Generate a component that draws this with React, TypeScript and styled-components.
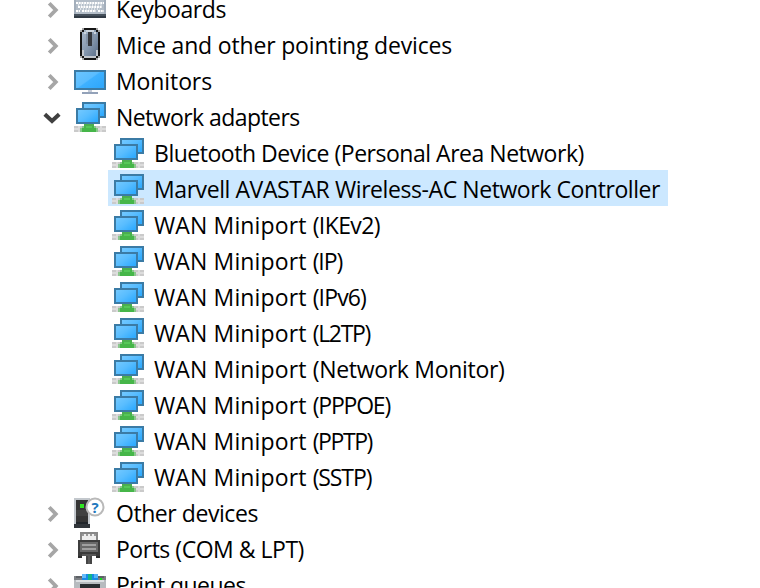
import React from "react";
import styled, { createGlobalStyle } from "styled-components";

interface Device {
  name: string;
  tracking: number;
  detail?: string;
  detailTracking?: number;
}

interface Category extends Device {
  icon: React.ReactNode;
  open?: boolean;
  children?: Device[];
}

const GlobalStyle = createGlobalStyle`
  body {
    margin: 0;
    background: #fff;
    overflow: hidden;
  }
`;

const Tree = styled.div`
  box-sizing: border-box;
  width: 760px;
  height: 588px;
  overflow: hidden;
  background: #fff;
  color: #000;
  font-family: "Open Sans", "Noto Sans", sans-serif;
  font-size: 23px;
`;

const Scroller = styled.div`
  margin-top: -10px;
`;

const Row = styled.div`
  display: flex;
  height: 36px;
  padding-left: 42px;
`;

const ChildRow = styled.div<{ $selected?: boolean }>`
  display: flex;
  box-sizing: border-box;
  width: 560px;
  height: 36px;
  margin-left: 108px;
  padding-left: 4px;
  background: ${({ $selected }) => ($selected ? "#cce8ff" : "transparent")};
`;

const Chevron = styled.svg`
  flex: none;
  width: 20px;
  height: 36px;
  margin-right: 12px;
  fill: none;
`;

const Icon = styled.svg`
  flex: none;
  width: 32px;
  height: 32px;
  margin-top: 2px;
  margin-right: 10px;
`;

const Label = styled.span<{ $tracking?: number }>`
  line-height: 39px;
  white-space: pre;
  letter-spacing: ${({ $tracking = 0 }) => $tracking}px;
`;

const KeyboardIcon = () => (
  <Icon viewBox="0 0 16 16" shapeRendering="crispEdges">
    <rect y="3" width="16" height="8" fill="#a3aebb" />
    <rect x="1" y="4" width="14" height="7" fill="#b3bdc8" />
    <path
      d="M1 5.5h14M2 7.5h12M1 9.5h2M4 9.5h7M12 9.5h3"
      stroke="#fff"
      strokeDasharray="1 .35"
      shapeRendering="auto"
    />
    <path d="M3 8.5h10M2 6.5h12" stroke="#dfe5ea" strokeDasharray=".6 .8" shapeRendering="auto" />
    <rect y="11" width="16" height="2" fill="#46515c" />
    <rect y="12" width="16" height="1" fill="#323b45" />
  </Icon>
);

const MouseIcon = () => (
  <Icon viewBox="0 0 16 16" shapeRendering="crispEdges">
    <defs>
      <linearGradient id="mouse" x1="0" y1="0" x2="1" y2="1">
        <stop offset="0" stopColor="#a9b8ca" />
        <stop offset=".5" stopColor="#8497ae" />
        <stop offset="1" stopColor="#5a6c86" />
      </linearGradient>
    </defs>
    <path d="M5 0h6v1h1v1h1v12h-1v1h-1v1H5v-1H4v-1H3V2h1V1h1z" fill="#151515" />
    <path d="M4 0h1v1H4zM11 0h1v1h-1zM3 1h1v1H3zM12 1h1v1h-1z" fill="#a5a5a5" />
    <path d="M3 14h1v1H3zM12 14h1v1h-1zM4 15h1v1H4zM11 15h1v1h-1z" fill="#aaa" />
    <path d="M5 1h6v1h1v12h-1v1H5v-1H4V2h1z" fill="url(#mouse)" />
    <path d="M6 1h4v1H6zM5 2h1v1H5zM10 2h1v1h-1z" fill="#ccd4dc" />
    <path d="M4 11h1v3H4zM11 11h1v3h-1zM5 14h6v1H5z" fill="#c3c8ce" />
    <rect x="7" y="2" width="2" height="7" fill="#34373d" />
    <path d="M6 3h1v5H6zM9 3h1v5H9z" fill="#8292a6" />
  </Icon>
);

const MonitorIcon = () => (
  <Icon viewBox="0 0 16 16" shapeRendering="crispEdges">
    <defs>
      <linearGradient id="screen" x1="0" y1="0" x2="1" y2=".8">
        <stop offset="0" stopColor="#6bc5ff" />
        <stop offset=".5" stopColor="#5abdff" />
        <stop offset=".55" stopColor="#3eb1ff" />
        <stop offset="1" stopColor="#30a8fc" />
      </linearGradient>
    </defs>
    <rect y="3" width="16" height="10" fill="#3b7ba5" />
    <rect x="1" y="4" width="14" height="8" fill="url(#screen)" />
    <rect x="7" y="13" width="2" height="1" fill="#c5ccd8" />
    <rect x="4" y="14" width="8" height="1" fill="#93a2b9" />
  </Icon>
);

const NetworkIcon = () => (
  <Icon viewBox="0 0 16 16" shapeRendering="crispEdges">
    <defs>
      <linearGradient id="net" x1="0" y1="0" x2="1" y2=".8">
        <stop offset="0" stopColor="#73c9ff" />
        <stop offset=".5" stopColor="#59bdff" />
        <stop offset="1" stopColor="#30abff" />
      </linearGradient>
    </defs>
    <rect x="4" y="1" width="12" height="8" fill="#3b7ba5" />
    <rect x="5" y="2" width="10" height="6" fill="url(#net)" />
    <rect x="1" y="4" width="12" height="8" fill="#3b7ba5" />
    <rect x="2" y="5" width="10" height="6" fill="url(#net)" />
    <rect y="13" width="16" height="3" fill="#cacaca" />
    <rect y="14" width="16" height="1" fill="#dcdcdc" />
    <path d="M2 13h1v3H2zM13 13h1v3h-1z" fill="#dcdcdc" />
    <rect x="5" y="12" width="5" height="1" fill="#4caf4f" />
    <rect x="4" y="13" width="7" height="3" fill="#46b649" />
    <path d="M4 13h1v1H4zM10 13h1v1h-1zM3 14h1v2H3zM11 14h1v2h-1z" fill="#8ac78c" />
    <rect x="6" y="13" width="3" height="1" fill="#55c858" />
  </Icon>
);

const UnknownIcon = () => (
  <Icon viewBox="0 0 32 32">
    <g shapeRendering="crispEdges">
      <rect y="2" width="16" height="26" fill="#c3c8cd" />
      <rect x="2" y="4" width="12" height="22" fill="#353535" />
      <rect x="2" y="14" width="12" height="6" fill="#414141" />
      <rect x="6" y="8" width="4" height="4" fill="#31e622" />
      <rect y="28" width="16" height="4" fill="#30353a" />
      <rect x="2" y="26" width="12" height="2" fill="#20252a" />
    </g>
    <circle cx="21" cy="11" r="8.5" fill="#fff" stroke="#b9b9b9" strokeWidth="2" />
    <text
      x="21"
      y="16.5"
      textAnchor="middle"
      fontFamily="Open Sans"
      fontSize="15"
      fontWeight="700"
      fill="#2277bd"
    >
      ?
    </text>
  </Icon>
);

const PortIcon = () => (
  <Icon viewBox="0 0 16 16" shapeRendering="crispEdges">
    <rect x="3" width="9" height="4" fill="#878787" />
    <rect x="4" y="1" width="7" height="3" fill="#ededed" />
    <path d="M4 1h1v1H4zM6 1h1v1H6zM8 1h1v1H8zM10 1h1v1h-1z" fill="#999" />
    <path d="M2 4h11v6h-1v1H3v-1H2z" fill="#3d3d3d" />
    <rect x="3" y="5" width="9" height="5" fill="#696969" />
    <path d="M4 6h7v1H4zM4 8h7v1H4z" fill="#a0a0a0" />
    <path d="M2 10h11v2H2z" fill="#3b3b3b" />
    <path d="M2 12h2v1H2zM11 12h2v1h-2z" fill="#2c2c2c" />
    <rect x="4" y="11" width="7" height="1" fill="#575757" />
    <rect x="6" y="12" width="3" height="4" fill="#454545" />
    <rect x="7" y="12" width="1" height="4" fill="#595959" />
  </Icon>
);

const PrinterIcon = () => (
  <Icon viewBox="0 0 16 16" shapeRendering="crispEdges">
    <rect y="4" width="16" height="12" fill="#b7bbbf" />
    <rect y="4" width="16" height="2" fill="#7d8185" />
    <rect x="1" y="4" width="14" height="1" fill="#5d6166" />
    <rect x="4" y="3" width="8" height="3" fill="#188be7" />
    <rect x="4" y="3" width="2" height="2" fill="#65baf8" />
    <rect x="7" y="3" width="2" height="3" fill="#10b58b" />
    <rect x="10" y="3" width="2" height="2" fill="#56b4f6" />
    <rect x="1" y="6" width="14" height="1" fill="#dde0e3" />
    <rect x="13" y="5" width="1" height="1" fill="#12e11b" />
    <rect x="3" y="8" width="10" height="3" fill="#292d31" />
  </Icon>
);

const miniport = (detail: string, detailTracking: number): Device => ({
  name: "WAN Miniport",
  tracking: 0.13,
  detail,
  detailTracking,
});

const categories: Category[] = [
  { name: "Keyboards", tracking: -0.41, icon: <KeyboardIcon /> },
  { name: "Mice and other pointing devices", tracking: -0.17, icon: <MouseIcon /> },
  { name: "Monitors", tracking: -0.1, icon: <MonitorIcon /> },
  {
    name: "Network adapters",
    tracking: -0.57,
    icon: <NetworkIcon />,
    open: true,
    children: [
      { name: "Bluetooth Device (Personal Area Network)", tracking: -0.48 },
      { name: "Marvell AVASTAR Wireless-AC Network Controller", tracking: -0.42 },
      miniport("(IKEv2)", -0.6),
      miniport("(IP)", -1.1),
      miniport("(IPv6)", -0.85),
      miniport("(L2TP)", -1.3),
      miniport("(Network Monitor)", -0.3),
      miniport("(PPPOE)", -1.2),
      miniport("(PPTP)", -1.4),
      miniport("(SSTP)", -1.1),
    ],
  },
  { name: "Other devices", tracking: -0.44, icon: <UnknownIcon /> },
  { name: "Ports (COM & LPT)", tracking: -0.48, icon: <PortIcon /> },
  { name: "Print queues", tracking: -0.55, icon: <PrinterIcon /> },
];

function DeviceLabel({ name, tracking, detail, detailTracking }: Device) {
  return (
    <Label $tracking={tracking}>
      {name}
      {detail && (
        <>
          {" "}
          <Label $tracking={detailTracking}>{detail}</Label>
        </>
      )}
    </Label>
  );
}

function App() {
  const selected = "Marvell AVASTAR Wireless-AC Network Controller";

  return (
    <Tree>
      <GlobalStyle />
      <Scroller>
        {categories.map(({ name, tracking, icon, open, children }) => (
          <React.Fragment key={name}>
            <Row>
              <Chevron viewBox="0 0 20 36">
                {open ? (
                  <path d="M2.8 16.3l7.2 6.7 7.2-6.7" stroke="#404040" strokeWidth="4" />
                ) : (
                  <path d="M7.2 13.2l6.6 6.8-6.6 6.8" stroke="#a6a6a6" strokeWidth="3.8" />
                )}
              </Chevron>
              {icon}
              <DeviceLabel name={name} tracking={tracking} />
            </Row>
            {open &&
              children?.map((device) => (
                <ChildRow
                  key={device.name + device.detail}
                  $selected={device.name === selected}
                >
                  <NetworkIcon />
                  <DeviceLabel {...device} />
                </ChildRow>
              ))}
          </React.Fragment>
        ))}
      </Scroller>
    </Tree>
  );
}

export default App;
